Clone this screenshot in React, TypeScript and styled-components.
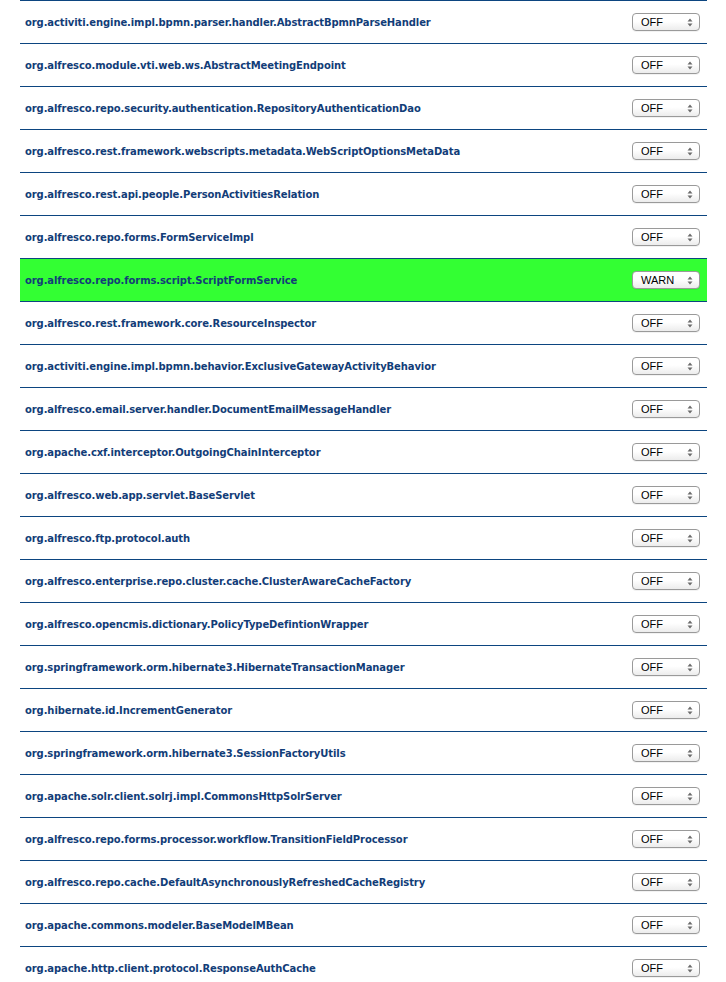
import React from "react";
import styled, { createGlobalStyle } from "styled-components";

const Global = createGlobalStyle`
  html, body { margin: 0; padding: 0; background: #ffffff; }
`;

const Table = styled.div`
  margin-left: 20px;
  width: 687px;
  border-top: 1px solid #0c4580;
`;

const Row = styled.div<{ $warn?: boolean }>`
  display: flex;
  align-items: center;
  justify-content: space-between;
  height: 42px;
  border-bottom: 1px solid #0c4580;
  background: ${(p) => (p.$warn ? "#33ff33" : "#ffffff")};
  padding: 0 7px 0 5px;
`;

const Name = styled.span`
  font-family: Verdana, "DejaVu Sans", sans-serif;
  font-weight: bold;
  font-size: 10px;
  letter-spacing: -0.1px;
  color: #123d78;
`;

const Select = styled.div`
  display: flex;
  align-items: center;
  justify-content: space-between;
  box-sizing: border-box;
  width: 68px;
  height: 18px;
  padding: 0 6px 0 8px;
  border: 1px solid #9a9a9a;
  border-radius: 4px;
  background: linear-gradient(#ffffff, #ffffff 45%, #ececec);
  box-shadow: 0 1px 0 rgba(0, 0, 0, 0.05);
  font-family: "Liberation Sans", Arial, sans-serif;
  font-size: 11px;
  color: #000;
`;

const Arrows = () => (
  <svg width="6" height="9" viewBox="0 0 6 9">
    <path d="M3 0.5 L5.5 3.5 H0.5 Z" fill="#6b6b6b" />
    <path d="M3 8.5 L5.5 5.5 H0.5 Z" fill="#6b6b6b" />
  </svg>
);

const rows: [string, string][] = [
  ["org.activiti.engine.impl.bpmn.parser.handler.AbstractBpmnParseHandler", "OFF"],
  ["org.alfresco.module.vti.web.ws.AbstractMeetingEndpoint", "OFF"],
  ["org.alfresco.repo.security.authentication.RepositoryAuthenticationDao", "OFF"],
  ["org.alfresco.rest.framework.webscripts.metadata.WebScriptOptionsMetaData", "OFF"],
  ["org.alfresco.rest.api.people.PersonActivitiesRelation", "OFF"],
  ["org.alfresco.repo.forms.FormServiceImpl", "OFF"],
  ["org.alfresco.repo.forms.script.ScriptFormService", "WARN"],
  ["org.alfresco.rest.framework.core.ResourceInspector", "OFF"],
  ["org.activiti.engine.impl.bpmn.behavior.ExclusiveGatewayActivityBehavior", "OFF"],
  ["org.alfresco.email.server.handler.DocumentEmailMessageHandler", "OFF"],
  ["org.apache.cxf.interceptor.OutgoingChainInterceptor", "OFF"],
  ["org.alfresco.web.app.servlet.BaseServlet", "OFF"],
  ["org.alfresco.ftp.protocol.auth", "OFF"],
  ["org.alfresco.enterprise.repo.cluster.cache.ClusterAwareCacheFactory", "OFF"],
  ["org.alfresco.opencmis.dictionary.PolicyTypeDefintionWrapper", "OFF"],
  ["org.springframework.orm.hibernate3.HibernateTransactionManager", "OFF"],
  ["org.hibernate.id.IncrementGenerator", "OFF"],
  ["org.springframework.orm.hibernate3.SessionFactoryUtils", "OFF"],
  ["org.apache.solr.client.solrj.impl.CommonsHttpSolrServer", "OFF"],
  ["org.alfresco.repo.forms.processor.workflow.TransitionFieldProcessor", "OFF"],
  ["org.alfresco.repo.cache.DefaultAsynchronouslyRefreshedCacheRegistry", "OFF"],
  ["org.apache.commons.modeler.BaseModelMBean", "OFF"],
  ["org.apache.http.client.protocol.ResponseAuthCache", "OFF"],
];

export default function App() {
  return (
    <>
      <Global />
      <Table>
        {rows.map(([name, level]) => (
          <Row key={name} $warn={level === "WARN"}>
            <Name>{name}</Name>
            <Select>
              <span>{level}</span>
              <Arrows />
            </Select>
          </Row>
        ))}
      </Table>
    </>
  );
}
